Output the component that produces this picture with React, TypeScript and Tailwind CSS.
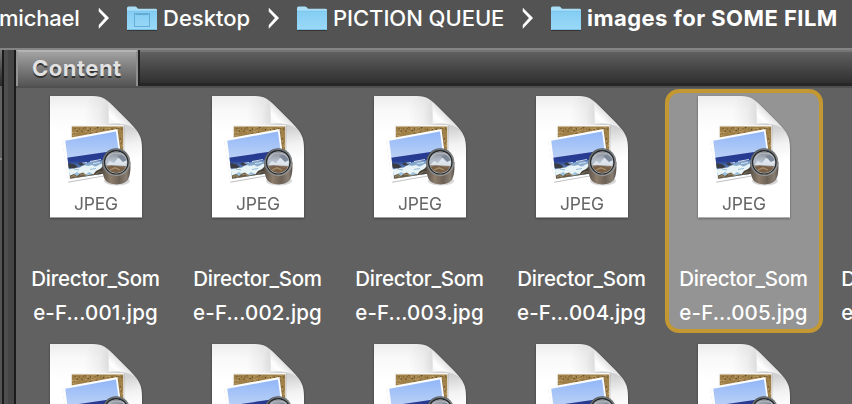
import React from "react";

const FONT = "font-['Inter','Liberation_Sans',sans-serif]";

function noise(n: number) {
  const v = Math.sin(n * 127.1 + 11.7) * 43758.5453;
  return v - Math.floor(v);
}

const SAND = ["#6d5228", "#c2a468", "#94733d", "#cdb27b", "#4f3c1e", "#a98549", "#b8965a"];
const specks = Array.from({ length: 320 }, (_, i) => ({
  x: 22 + noise(i) * 50,
  y: 30.7 + noise(i + 500) * 27,
  c: SAND[Math.floor(noise(i + 900) * SAND.length)],
}));

function Defs() {
  return (
    <svg width="0" height="0" className="absolute" aria-hidden="true">
      <defs>
        <linearGradient id="page" x1="0" y1="0" x2="0" y2="1">
          <stop offset="0" stopColor="#ededed" />
          <stop offset="0.12" stopColor="#f9f9f9" />
          <stop offset="0.3" stopColor="#ffffff" />
        </linearGradient>
        <radialGradient id="pageShade" gradientUnits="userSpaceOnUse" cx="78" cy="20" r="44">
          <stop offset="0.3" stopColor="#000" stopOpacity="0.17" />
          <stop offset="0.65" stopColor="#000" stopOpacity="0.05" />
          <stop offset="1" stopColor="#000" stopOpacity="0" />
        </radialGradient>
        <linearGradient id="fold" gradientUnits="userSpaceOnUse" x1="60" y1="29" x2="72" y2="17">
          <stop offset="0" stopColor="#f4f4f4" />
          <stop offset="0.45" stopColor="#ffffff" />
          <stop offset="1" stopColor="#dedede" />
        </linearGradient>
        <linearGradient id="sky" x1="0" y1="0" x2="0" y2="1">
          <stop offset="0" stopColor="#8fb5f8" />
          <stop offset="1" stopColor="#bcd2f6" />
        </linearGradient>
        <linearGradient id="sea" x1="0" y1="0" x2="0" y2="1">
          <stop offset="0" stopColor="#26378e" />
          <stop offset="0.35" stopColor="#283f93" />
          <stop offset="0.6" stopColor="#6c93bd" />
          <stop offset="1" stopColor="#b4d0de" />
        </linearGradient>
        <linearGradient id="barrel" x1="0" y1="0" x2="1" y2="0">
          <stop offset="0" stopColor="#5c5349" />
          <stop offset="0.3" stopColor="#8c7d6c" />
          <stop offset="0.6" stopColor="#6d6156" />
          <stop offset="0.85" stopColor="#8a7f74" />
          <stop offset="1" stopColor="#57504a" />
        </linearGradient>
        <linearGradient id="rim" x1="0" y1="0" x2="0.6" y2="1">
          <stop offset="0" stopColor="#3d4247" />
          <stop offset="0.5" stopColor="#6d7073" />
          <stop offset="1" stopColor="#9c9892" />
        </linearGradient>
        <linearGradient id="lens" x1="0" y1="0" x2="0" y2="1">
          <stop offset="0" stopColor="#85888f" />
          <stop offset="0.45" stopColor="#b8c2d0" />
          <stop offset="0.6" stopColor="#a5a9ad" />
          <stop offset="0.68" stopColor="#86705a" />
          <stop offset="1" stopColor="#5c432d" />
        </linearGradient>
        <linearGradient id="folderFront" x1="0" y1="0" x2="0" y2="1">
          <stop offset="0" stopColor="#85cdf3" />
          <stop offset="1" stopColor="#9ad9f8" />
        </linearGradient>
        <clipPath id="photoClip">
          <path d="M15.3 44.8 66 35.5 71.3 75 20 82.8Z" />
        </clipPath>
        <clipPath id="lensClip">
          <circle cx="66.3" cy="66.2" r="10.6" />
        </clipPath>
      </defs>
    </svg>
  );
}

function JpegIcon() {
  return (
    <svg
      width="92"
      height="122"
      viewBox="0 0 92 122"
      className="block shrink-0 overflow-visible drop-shadow-[0_1px_1px_rgba(0,0,0,0.4)]"
    >
      <path d="M0 0H43C53 0 57 4 63 10L80 27C89 36 92 41 92 53V121.5H0Z" fill="url(#page)" />
      <path d="M0 0H43C53 0 57 4 63 10L80 27C89 36 92 41 92 53V121.5H0Z" fill="url(#pageShade)" />
      <path d="M57.5 5C59 12 58.7 19 58.7 28.3C69 26.8 80 28 87 35.5L80 27L63 10Z" fill="url(#fold)" />
      <path d="M58.8 28.4C69 26.9 80 28.2 87 35.5" fill="none" stroke="#c4c4c4" strokeWidth="0.6" />

      <rect x="21" y="29.8" width="53.5" height="36" fill="#000" opacity="0.15" />
      <rect x="20.7" y="29" width="53" height="36" fill="#f6f6f4" />
      <rect x="21.8" y="30.5" width="51.4" height="34" fill="#9f8049" />
      {specks.map((s, i) => (
        <rect key={i} x={s.x} y={s.y} width="1.15" height="1.05" fill={s.c} />
      ))}

      <path d="M12.2 44 67.9 34 73.8 76.8 18.4 86.8Z" fill="#000" opacity="0.25" />
      <path d="M11.8 43.2 67.5 33 73.3 76.2 18 85.7Z" fill="#fdfdfd" />
      <g clipPath="url(#photoClip)">
        <rect x="12" y="34" width="62" height="29" fill="url(#sky)" />
        <path d="M12 62.3 72 53.8V86H12Z" fill="url(#sea)" />
        <path d="M38 66.5C44 64 48 65.5 53 64V82H20L19 74C28 76 30 69 38 66.5Z" fill="#a9cfe2" opacity="0.65" />
        <path
          d="M18 73C22 74 23 70 27 71.5S32 68 36 69.5 41 67.5 44 70 50 66 54 68L56 75 49 76 45 79 39 76 34 80 27 76 20 80Z"
          fill="#f0f9fa"
          opacity="0.92"
        />
        <path d="M31 67.5 37 66.5M40 65.5 51 63.5M43 67.5 50 66.5" stroke="#dfeaf4" strokeWidth="0.9" />
        <path d="M24 73 29 74M40 73.5 46 72.5" stroke="#8fb6d0" strokeWidth="0.9" />
        <path d="M16.5 68.5C19 66 21 68 24 68L28 71 24 72.5 17.5 72ZM28 67.3 31.5 66.5 35 69 30 69.6Z" fill="#3a3c44" />
        <path d="M19 85 20 79.5 24 78 27 80 30 77.5 33 76.5 37 79.5 43 78 43 82Z" fill="#6b5d45" />
        <path d="M21 81 24 79.5 27 82M30 79 33.5 78 36.5 80" fill="none" stroke="#98886a" strokeWidth="1.1" />
        <path d="M42.5 79.5 46 75 50 73 53 70 58 72 59 81Z" fill="#46403a" />
        <path d="M45 78.5 49 76 54 76" fill="none" stroke="#7d7059" strokeWidth="1.2" />
      </g>

      <ellipse cx="67" cy="85" rx="13" ry="4.6" fill="#000" opacity="0.15" />
      <path d="M52.4 67C52.2 76 53 80 55 83.5 59 90 74 90 78 83.5 80 80 80.7 75 80.4 66Z" fill="url(#barrel)" />
      <circle cx="66.3" cy="66.2" r="14" fill="url(#rim)" />
      <circle cx="66.3" cy="66.2" r="13" fill="none" stroke="#8f9396" strokeWidth="0.6" />
      <circle cx="66.3" cy="66.2" r="12.3" fill="#24282b" />
      <circle cx="66.3" cy="66.4" r="11" fill="#b9bcbc" />
      <g clipPath="url(#lensClip)">
        <rect x="55" y="55" width="23" height="23" fill="url(#lens)" />
        <path d="M56 69 60 65 64 67 68 62 73 63 78 65V70L69 69.5Z" fill="#e4ebf3" opacity="0.85" />
        <path d="M67 60 72 58.5 77 64 73 66Z" fill="#7d8899" />
        <path d="M56 72 61 69.5 67 70 72 72 77 71V78H56Z" fill="#786048" />
        <path d="M60 74 65 71.8 70 74" fill="none" stroke="#a98d66" strokeWidth="1.3" />
        <path d="M57.5 62C61 56 69 56 74 59.5" fill="none" stroke="#fff" strokeWidth="1" opacity="0.35" />
      </g>

      <text
        x="24"
        y="114"
        textLength="44"
        lengthAdjust="spacing"
        fill="#666"
        className={`${FONT} text-[17.5px] font-normal`}
      >
        JPEG
      </text>
    </svg>
  );
}

function Folder({ desktop = false }: { desktop?: boolean }) {
  return (
    <svg width="30" height="25" viewBox="0 0 30 25" className="shrink-0 drop-shadow-[0_1px_0.5px_rgba(0,0,0,0.35)]">
      <path d="M0 2Q0 .5 1.5 .5H8Q9 .5 9.7 1.3L11 2.7H28.5Q30 2.7 30 4V24H0Z" fill="#a9def8" />
      <path d="M0 5H30V23Q30 24 29 24H1Q0 24 0 23Z" fill="url(#folderFront)" />
      <path d="M0 5.2H30" stroke="#72bfe5" strokeWidth=".6" />
      <path d="M.5 23.5H29.5" stroke="#74b8da" strokeWidth=".8" />
      {desktop && (
        <g fill="none" stroke="#5fabd3">
          <rect x="7.5" y="7.5" width="15" height="13" strokeWidth="0.9" />
          <path d="M8.5 8.3H21.5" strokeWidth="1.5" />
        </g>
      )}
    </svg>
  );
}

function Chevron() {
  return (
    <svg width="12" height="21" viewBox="0 0 12 21" className="shrink-0">
      <path d="M1 .3 10.8 10 1 20.3V17L7.2 10 1 3.5Z" fill="#fff" stroke="#fff" strokeWidth="0.5" />
    </svg>
  );
}

function Breadcrumb() {
  return (
    <nav className={`${FONT} flex h-12 shrink-0 items-start bg-[#535353] text-[22px] leading-9 font-medium whitespace-nowrap text-white`}>
      <span className="-ml-px w-[99px] shrink-0 tracking-[-0.2px]">michael</span>
      <span className="w-[29px] shrink-0 pt-2"><Chevron /></span>
      <span className="w-9 shrink-0 pt-1.5"><Folder desktop /></span>
      <span className="w-[105px] shrink-0">Desktop</span>
      <span className="w-[29px] shrink-0 pt-2"><Chevron /></span>
      <span className="w-9 shrink-0 pt-1.5"><Folder /></span>
      <span className="w-[189px] shrink-0 tracking-[-0.05px]">PICTION QUEUE</span>
      <span className="w-[29px] shrink-0 pt-2"><Chevron /></span>
      <span className="w-9 shrink-0 pt-1.5"><Folder /></span>
      <span className="font-bold tracking-[0.45px]">images for SOME FILM</span>
    </nav>
  );
}

function FileCard({ id, selected = false }: { id: string; selected?: boolean }) {
  return (
    <div
      className={`flex h-[244px] w-[158px] flex-col items-center rounded-[14px] border-4 pt-[3px] ${
        selected ? "border-[#c39732] bg-[#949494]" : "border-transparent"
      }`}
    >
      <JpegIcon />
      <div className={`${FONT} mt-11 -ml-px text-center text-[20.5px] leading-[34px] font-medium whitespace-nowrap text-white`}>
        <div className="tracking-[-0.27px]">Director_Som</div>
        <div className="tracking-[0.15px]">e-F...{id}.jpg</div>
      </div>
    </div>
  );
}

const ids = ["001", "002", "003", "004", "005", "006", "007", "008", "009", "010", "011", "012"];

export default function App() {
  return (
    <div className="flex h-[404px] w-[852px] flex-col overflow-hidden bg-[#616161]">
      <Defs />
      <Breadcrumb />
      <div className="h-0.5 shrink-0 bg-[#858585]" />
      <div className="flex min-h-0 flex-1">
        <div className="flex w-4 shrink-0">
          <div className="flex w-0.5 flex-col">
            <div className="h-9 bg-linear-to-b from-[#777] to-[#292929]" />
            <div className="h-[72px] bg-[#616161]" />
            <div className="h-0.5 bg-[#888]" />
            <div className="flex-1 bg-[#535353]" />
          </div>
          <div className="w-0.5 bg-[#1b1b1b]" />
          <div className="w-1 bg-[#4e4e4e]" />
          <div className="w-1.5 bg-[#454545]" />
          <div className="w-0.5 bg-[#1b1b1b]" />
        </div>
        <main className="flex min-w-0 flex-1 flex-col">
          <div className="flex h-9 shrink-0">
            <div
              className={`${FONT} w-[122px] shrink-0 border-x-2 border-t-2 border-t-[#b4b4b4] border-r-[#8e8e8e] border-l-[#949494] bg-linear-to-b from-[#a2a2a2] to-[#555] pl-[14px] text-[22px] leading-[33px] font-bold tracking-[0.5px] text-[#e1e1e1] [text-shadow:0_2px_0_#333]`}
            >
              Content
            </div>
            <div className="w-0.5 shrink-0 bg-[#222]" />
            <div className="flex-1 border-t-2 border-b-[3px] border-t-[#757575] border-b-[#272727] bg-linear-to-b from-[#606060] to-[#303030]" />
          </div>
          <div className="h-0.5 shrink-0 bg-[#505050]" />
          <div className="-mt-px ml-px grid w-[968px] grid-cols-[repeat(6,158px)] gap-1 pt-0.5">
            {ids.map((id) => (
              <FileCard key={id} id={id} selected={id === "005"} />
            ))}
          </div>
        </main>
      </div>
    </div>
  );
}
